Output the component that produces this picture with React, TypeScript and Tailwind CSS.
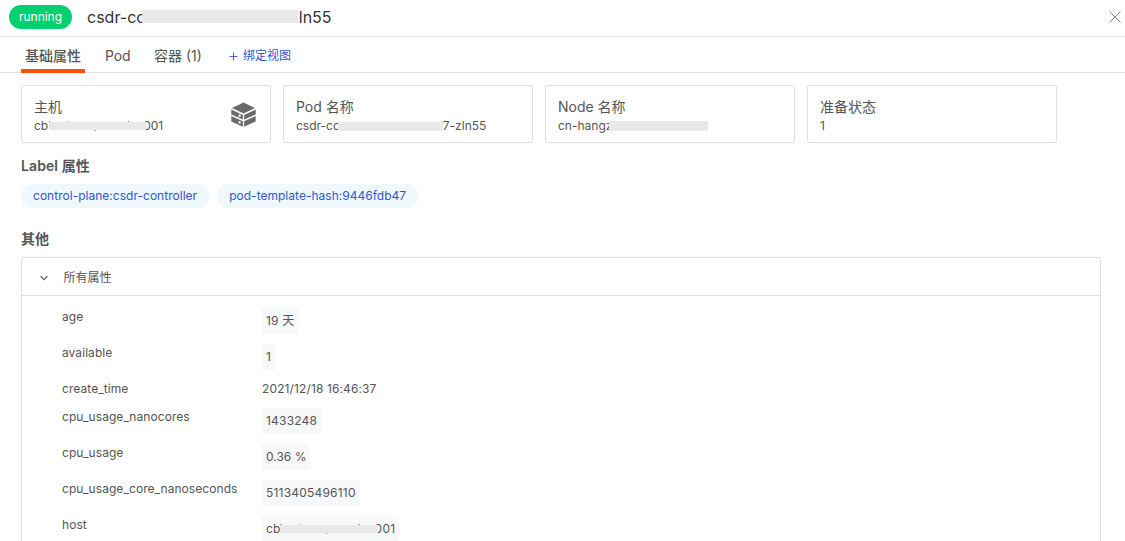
import type { ReactNode } from "react";

function Redacted({ className, children }: { className: string; children?: ReactNode }) {
  return <span className={`relative z-10 inline-block shrink-0 bg-[#e9e9e9] ${className}`}>{children}</span>;
}

function HostMarks() {
  return (
    <>
      <i className="absolute -top-px left-0 h-px w-px bg-[#888]" />
      <i className="absolute -top-px left-[19px] h-px w-px bg-[#999]" />
      <i className="absolute -bottom-px left-[46px] h-px w-px bg-[#888]" />
      <i className="absolute -top-px left-[79px] h-px w-px bg-[#888]" />
    </>
  );
}

function HostIcon() {
  return (
    <svg className="mr-[2px] mt-[5px] h-[25px] w-[25px] shrink-0" viewBox="0 0 25 25" fill="#6b6b6b">
      <path d="M12.5 .5 24 6 12.5 11.4 1 6z" />
      <path d="M.3 7.4 11.9 12.9v4.6L.3 12.4zM24.7 7.4 13.1 12.9v4.6l11.6-5.1z" />
      <path d="M.3 14 11.9 19.3v5.5L.3 19.4zM24.7 14 13.1 19.3v5.5l11.6-5.4z" />
      <path d="M7.6 12.6h2v2.2h-2zM7.6 19.2h2v2.2h-2z" fill="#fff" />
    </svg>
  );
}

function Card({ title, children, icon }: { title: string; children: ReactNode; icon?: ReactNode }) {
  return (
    <div className="flex h-[58px] w-[250px] justify-between rounded-[2px] border border-[#dedfe5] px-3 pt-[11px]">
      <div>
        <div className="h-5 text-sm leading-5 tracking-[-0.02px]">{title}</div>
        <div className="flex h-[18px] items-center text-xs leading-[18px]">{children}</div>
      </div>
      {icon}
    </div>
  );
}

function Row({ name, children, plain }: { name: string; children: ReactNode; plain?: boolean }) {
  return (
    <div className="mb-[10px] flex items-start">
      <div className="w-[200px] shrink-0 leading-[18px] tracking-[0.06px]">{name}</div>
      {plain ? (
        <div className="leading-[18px] tracking-[0.12px]">{children}</div>
      ) : (
        <div className="flex h-[26px] items-center bg-[#f7f8fa] px-1 tracking-[0.2px]">{children}</div>
      )}
    </div>
  );
}

export default function App() {
  return (
    <div className="h-[541px] overflow-hidden bg-white font-['Inter','Noto_Sans_CJK_SC',sans-serif] text-xs text-[#555]">
      <header className="flex h-[37px] items-center border-b border-[#dedfe5] pb-[2px] pl-[9px] pr-[4px]">
        <span className="flex h-6 w-[63px] items-center justify-center rounded-full bg-[#00d070] text-white">running</span>
        <h1 className="ml-[15px] flex items-center whitespace-nowrap text-base text-[#333]">
          csdr-cc
          <Redacted className="-ml-[3.5px] -mt-[2px] h-[13px] w-[156px]" />
          <span className="-ml-2">zln55</span>
        </h1>
        <svg className="ml-auto h-3 w-3" viewBox="0 0 12 12" stroke="#888" strokeWidth="1">
          <path d="M.5.5l11 11M11.5.5l-11 11" />
        </svg>
      </header>

      <nav className="flex h-9 items-center border-b border-[#dedfe5] pl-[21px] text-sm">
        <div className="relative flex h-full w-16 items-center justify-center pt-[3px] font-medium">
          基础属性
          <span className="absolute -bottom-px left-0 h-1 w-full bg-[#ff4f00]" />
        </div>
        <div className="ml-5 w-[49px] pt-[2px] tracking-[-0.01em]">Pod</div>
        <div className="w-[75px] pt-[2px]">容器 (1)</div>
        <div className="flex items-center pt-[3px] text-xs text-[#3157cf]">
          <svg className="mr-[5px] h-[9px] w-[9px]" viewBox="0 0 9 9" stroke="currentColor" strokeWidth="0.9">
            <path d="M4.5 .5v8M.5 4.5h8" />
          </svg>
          绑定视图
        </div>
      </nav>

      <main className="pl-[21px] pr-6 pt-3">
        <div className="flex gap-3">
          <Card title="主机" icon={<HostIcon />}>
            cb
            <Redacted className="ml-px h-2 w-[97px]">
              <HostMarks />
            </Redacted>
            <span className="-ml-[3px]">001</span>
          </Card>
          <Card title="Pod 名称">
            csdr-cc
            <Redacted className="-ml-[2px] h-[9px] w-[105px]" />
            <span>7-zln55</span>
          </Card>
          <Card title="Node 名称">
            cn-hangz
            <Redacted className="-ml-[3px] h-[10px] w-[99px]" />
          </Card>
          <Card title="准备状态">1</Card>
        </div>

        <h2 className="mt-[13px] h-5 text-sm font-semibold leading-5 tracking-[0.1px]">Label 属性</h2>
        <div className="mt-2 flex gap-2 tracking-[0.02px] text-[#3157cf]">
          <span className="flex h-6 items-center rounded-full bg-[#eff7ff] px-3">control-plane:csdr-controller</span>
          <span className="flex h-6 items-center rounded-full bg-[#eff7ff] px-3">pod-template-hash:9446fdb47</span>
        </div>

        <h2 className="mt-[21px] h-5 text-sm font-semibold leading-5">其他</h2>
        <section className="mt-2 rounded-t-[2px] border border-[#dedfe5]">
          <div className="flex h-[38px] items-center border-b border-[#dedfe5] pl-[18px]">
            <svg className="mr-[15px] mt-[2px] h-2 w-2" viewBox="0 0 8 8" fill="none" stroke="#555" strokeWidth="1.1">
              <path d="M.5 2.2 4 5.7l3.5-3.5" />
            </svg>
            <span className="pl-[0.5px] pt-[2px]">所有属性</span>
          </div>
          <div className="pl-10 pt-3">
            <Row name="age">19 天</Row>
            <Row name="available">1</Row>
            <Row name="create_time" plain>2021/12/18 16:46:37</Row>
            <Row name="cpu_usage_nanocores">1433248</Row>
            <Row name="cpu_usage"><span className="tracking-normal">0.36 %</span></Row>
            <Row name="cpu_usage_core_nanoseconds">5113405496110</Row>
            <Row name="host">
              cb
              <Redacted className="-ml-px h-2 w-[98px]">
                <HostMarks />
              </Redacted>
              <span className="-ml-[3px]">001</span>
            </Row>
          </div>
        </section>
      </main>
    </div>
  );
}
